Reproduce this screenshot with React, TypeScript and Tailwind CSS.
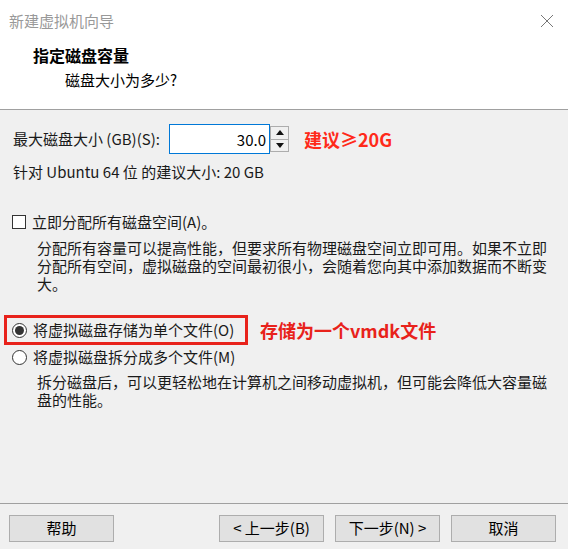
import React from "react";

const font = { fontFamily: '"Noto Sans CJK SC", "Noto Sans", sans-serif' };

function WinButton({ label, className = "" }: { label: string; className?: string }) {
  return (
    <button className={"h-[27px] w-[105px] border border-[#adadad] bg-[#e1e1e1] text-[15px] text-black " + className}>
      {label}
    </button>
  );
}

function Radio({ checked }: { checked: boolean }) {
  return (
    <span className="flex h-[15px] w-[15px] items-center justify-center rounded-full border border-[#333] bg-white">
      {checked && <span className="h-[9px] w-[9px] rounded-full bg-[#333]" />}
    </span>
  );
}

export default function App() {
  const [size, setSize] = React.useState("30.0");
  const [split, setSplit] = React.useState(false);

  return (
    <div className="flex h-[549px] w-[568px] flex-col bg-[#f0f0f0] text-[15px] text-[#1a1a1a]" style={font}>
      {/* header */}
      <div className="h-[110px] border-b border-[#a0a0a0] bg-white">
        <div className="flex h-[42px] items-center justify-between pl-[9px] pr-[14px]">
          <span className="text-[15px] text-[#999]">新建虚拟机向导</span>
          <svg width="14" height="14" viewBox="0 0 14 14" className="stroke-[#777]">
            <path d="M1 1 L13 13 M13 1 L1 13" strokeWidth="1" />
          </svg>
        </div>
        <div className="mt-[3px] pl-[33px] text-[16px] font-bold leading-[20px] text-black">指定磁盘容量</div>
        <div className="mt-[5px] pl-[65px] leading-[20px] text-black">磁盘大小为多少?</div>
      </div>

      {/* body */}
      <div className="flex-1 pl-[12px]">
        <div className="mt-[14px] flex items-center">
          <span className="ml-[1px] w-[156px]">最大磁盘大小 (GB)(S):</span>
          <div className="flex h-[30px] items-center">
            <input
              value={size}
              onChange={(e) => setSize(e.target.value)}
              className="h-[30px] w-[101px] border border-[#0078d7] bg-white pr-[3px] text-right text-[15px] text-black outline-none"
            />
            <div className="flex h-[26px] w-[19px] flex-col border border-[#adadad] bg-[#f0f0f0]">
              <div className="flex flex-1 items-center justify-center border-b border-[#adadad]">
                <svg width="8" height="5" viewBox="0 0 8 5"><path d="M0 5 L4 0 L8 5 Z" fill="#111" /></svg>
              </div>
              <div className="flex flex-1 items-center justify-center">
                <svg width="8" height="5" viewBox="0 0 8 5"><path d="M0 0 L4 5 L8 0 Z" fill="#111" /></svg>
              </div>
            </div>
          </div>
          <span className="ml-[15px] text-[18px] font-bold text-[#ff2a1a]">建议≥20G</span>
        </div>

        <div className="mt-[8px] pl-[1px] leading-[20px]">针对 Ubuntu 64 位 的建议大小: 20 GB</div>

        <div className="mt-[30px] flex items-center gap-[6px] leading-[20px]">
          <span className="h-[14px] w-[14px] border border-[#333] bg-white" />
          <span>立即分配所有磁盘空间(A)。</span>
        </div>
        <p className="mt-[7px] w-[540px] pl-[25px] leading-[18px]">
          分配所有容量可以提高性能，但要求所有物理磁盘空间立即可用。如果不立即分配所有空间，虚拟磁盘的空间最初很小，会随着您向其中添加数据而不断变大。
        </p>

        <div className="mt-[22px] flex items-center gap-[12px]">
          <div
            onClick={() => setSplit(false)}
            className="-ml-[8px] flex h-[30px] w-[244px] items-center gap-[6px] border-[3px] border-[#e8221b] pl-[5px] leading-[20px]"
          >
            <Radio checked={!split} />
            <span>将虚拟磁盘存储为单个文件(O)</span>
          </div>
          <span className="text-[18px] font-bold text-[#e8221b]">存储为一个vmdk文件</span>
        </div>
        <div onClick={() => setSplit(true)} className="flex h-[24px] items-center gap-[6px] leading-[20px]">
          <Radio checked={split} />
          <span>将虚拟磁盘拆分成多个文件(M)</span>
        </div>
        <p className="mt-[4px] w-[540px] pl-[25px] leading-[18px]">
          拆分磁盘后，可以更轻松地在计算机之间移动虚拟机，但可能会降低大容量磁盘的性能。
        </p>
      </div>

      {/* footer */}
      <div className="flex h-[46px] items-start border-t border-[#a0a0a0] pl-[9px] pt-[11px]">
        <WinButton label="帮助" />
        <WinButton label="< 上一步(B)" className="ml-[105px]" />
        <WinButton label="下一步(N) >" className="ml-[11px]" />
        <WinButton label="取消" className="ml-[11px]" />
      </div>
    </div>
  );
}
